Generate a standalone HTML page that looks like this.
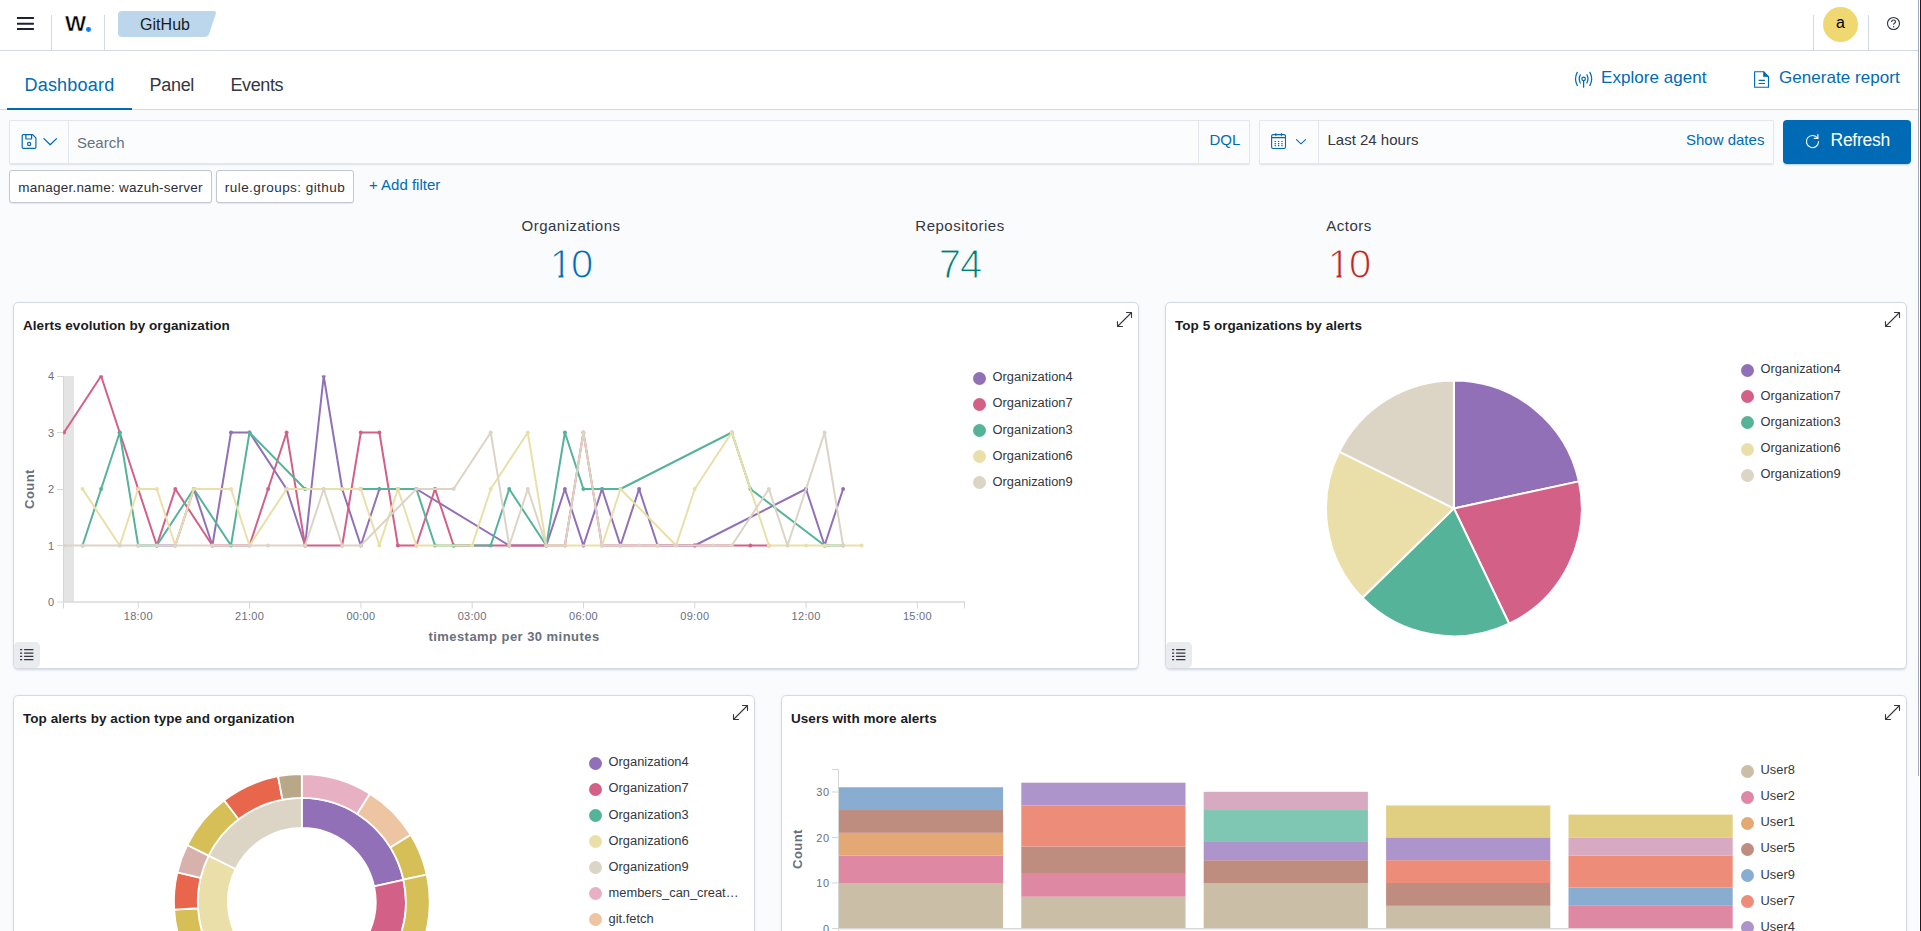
<!DOCTYPE html>
<html><head><meta charset="utf-8"><title>GitHub - Wazuh</title>
<style>
*{box-sizing:border-box;margin:0;padding:0}
html,body{width:1921px;height:931px;overflow:hidden}
body{background:#FAFBFD;font-family:"Liberation Sans",Arial,sans-serif;color:#343741;position:relative}
.abs{position:absolute}
#hdr{position:absolute;left:0;top:0;width:1918px;height:51px;background:#fff;border-bottom:1px solid #D3DAE6}
.vsep{position:absolute;top:15px;width:1px;height:35px;background:#D3DAE6}
#tabs{position:absolute;left:0;top:51px;width:1918px;height:59px;background:#fff;border-bottom:1px solid #D3DAE6}
.tab{position:absolute;top:22px;font-size:18px;line-height:24px;color:#343741;white-space:nowrap}
.lnk{position:absolute;color:#006BB4;white-space:nowrap}
.box{position:absolute;background:#FBFCFD;border:1px solid #E3E6EC;border-radius:1px;box-shadow:0 1px 1px -1px rgba(152,162,179,.3),0 2px 2px -1px rgba(152,162,179,.25)}
.pill{position:absolute;top:170px;height:32.5px;background:#fff;border:1px solid #C2C7D2;border-radius:3px;font-size:13.5px;line-height:33.5px;color:#2b2e38;white-space:nowrap;text-align:center;letter-spacing:.22px;box-shadow:0 1px 1px rgba(152,162,179,.2)}
.panel{position:absolute;background:#fff;border:1px solid #D3DAE6;border-radius:5px;box-shadow:0 2px 2px -1px rgba(152,162,179,.3),0 1px 5px -2px rgba(152,162,179,.3)}
.ttl{position:absolute;font-weight:700;font-size:13.5px;color:#1a1c21;white-space:nowrap;letter-spacing:.04px;line-height:16px}
.exp{position:absolute}
.lb{position:absolute;width:26px;height:26px;border-radius:4.5px;background:#E9EBEE}
.lb svg{position:absolute;left:6px;top:7px}
.lg{position:absolute;font-size:12.85px;line-height:20px;color:#343741;white-space:nowrap;padding-left:19.5px;letter-spacing:0}
.lg i{position:absolute;left:0;top:4.5px;width:13px;height:13px;border-radius:50%}
.stat{position:absolute;width:300px;text-align:center}
.stat .l{font-size:15px;line-height:20px;color:#343741;letter-spacing:.5px}
.stat .n{font-size:40px;line-height:46px;margin-top:5px;-webkit-text-stroke:1.1px #FAFBFD;letter-spacing:-1px}
.one{display:inline-block;clip-path:polygon(0 0,100% 0,100% 72%,64% 72%,64% 100%,42% 100%,42% 72%,0 72%)}
svg text.tk{font-size:11px;fill:#69707D;font-family:"Liberation Sans",Arial,sans-serif}
svg text.ax{font-size:13px;font-weight:700;fill:#69707D;font-family:"Liberation Sans",Arial,sans-serif;letter-spacing:.45px}
</style></head><body>

<!-- top header -->
<div id="hdr">
  <svg class="abs" style="left:17px;top:16px" width="18" height="16" viewBox="0 0 18 16"><path d="M0,2 H16.9 M0,7.7 H16.9 M0,13.05 H16.9" stroke="#1f222c" stroke-width="1.9"/></svg>
  <div class="vsep" style="left:51px"></div>
  <div class="abs" style="left:65px;top:9.8px;font-size:22.4px;font-weight:700;line-height:28px;color:#000;transform:scaleX(1.0);transform-origin:0 0;-webkit-text-stroke:.5px #fff">W</div>
  <div class="abs" style="left:85.75px;top:26.75px;width:4.9px;height:4.9px;border-radius:50%;background:#0A7BFF"></div>
  <div class="vsep" style="left:104px"></div>
  <svg class="abs" style="left:118px;top:11px" width="99" height="26" viewBox="0 0 99 26"><path d="M4,0 H95.5 Q98.8,0 97.8,3 L91,23 Q90,26 86.5,26 H4 Q0,26 0,22 V4 Q0,0 4,0 Z" fill="#BCD7EC"/></svg>
  <div class="abs" style="left:118px;top:12px;width:94px;height:26px;line-height:26px;text-align:center;font-size:16px;color:#1a1c21;letter-spacing:.05px">GitHub</div>
  <div class="vsep" style="left:1813px"></div>
  <div class="abs" style="left:1823px;top:7px;width:35px;height:35px;border-radius:50%;background:#EFD872;text-align:center;line-height:32px;font-size:16px;color:#000">a</div>
  <div class="vsep" style="left:1868px"></div>
  <svg class="abs" style="left:1886px;top:16px" width="15" height="15" viewBox="0 0 15 15"><circle cx="7.5" cy="7.5" r="6" fill="none" stroke="#343741" stroke-width="1.1"/><path d="M5.6,6 Q5.6,4 7.6,4 Q9.5,4 9.5,5.7 Q9.5,6.7 8.4,7.3 Q7.6,7.8 7.6,8.8" fill="none" stroke="#343741" stroke-width="1.1"/><circle cx="7.6" cy="10.7" r=".75" fill="#343741"/></svg>
</div>

<!-- tabs row -->
<div id="tabs">
  <div class="tab" style="left:24.5px;color:#006BB4;letter-spacing:.2px">Dashboard</div>
  <div class="tab" style="left:149.5px;letter-spacing:-.3px">Panel</div>
  <div class="tab" style="left:230.5px;letter-spacing:-.4px">Events</div>
  <div class="abs" style="left:7px;top:57px;width:125px;height:2px;background:#006BB4"></div>
  <svg class="abs" style="left:1574px;top:19px" width="20" height="19" viewBox="0 0 20 19"><g fill="none" stroke="#006BB4" stroke-width="1.25" stroke-linecap="round"><circle cx="9.6" cy="8.9" r="1.75"/><path d="M9.6,10.8 V17.2"/><path d="M6.3,4.8 Q4.2,8.9 6.3,13 M12.9,4.8 Q15,8.9 12.9,13"/><path d="M3.3,2.4 Q-0.3,8.9 3.3,15.4 M15.9,2.4 Q19.5,8.9 15.9,15.4"/></g></svg>
  <div class="lnk" style="left:1601px;top:16.4px;font-size:17px;line-height:22px;letter-spacing:.05px">Explore agent</div>
  <svg class="abs" style="left:1753px;top:19px" width="18" height="19" viewBox="0 0 18 19"><path d="M1.6,1.7 H10.6 L15.5,6.6 V17.2 H1.6 Z M5.6,10.4 H11.9 M5.6,13.5 H11.9" fill="none" stroke="#006BB4" stroke-width="1.15" stroke-linejoin="round"/><path d="M10.6,1.7 L15.5,6.6 H10.6 Z" fill="#006BB4" stroke="#006BB4" stroke-width=".8" stroke-linejoin="round"/></svg>
  <div class="lnk" style="left:1779px;top:16.4px;font-size:17px;line-height:22px;letter-spacing:.05px">Generate report</div>
</div>

<!-- search bar -->
<div class="box" style="left:9px;top:120px;width:1241px;height:44px"></div>
<div class="abs" style="left:68px;top:121px;width:1px;height:42px;background:#E3E6EC"></div>
<div class="abs" style="left:1198px;top:121px;width:1px;height:42px;background:#E3E6EC"></div>
<svg class="abs" style="left:20.5px;top:133px" width="40" height="18" viewBox="0 0 40 18"><g fill="none" stroke="#006BB4" stroke-width="1.2" stroke-linejoin="round" stroke-linecap="round"><path d="M2.4,1.6 H11.6 L14.9,4.9 V14.2 Q14.9,15.4 13.7,15.4 H2.4 Q1.2,15.4 1.2,14.2 V2.8 Q1.2,1.6 2.4,1.6 Z"/><path d="M4.9,1.9 V6 H10.6 V1.9"/><circle cx="8.1" cy="11" r="1.6"/><path d="M22.9,5.6 L29.2,11.7 L35.5,5.6" stroke-width="1.3"/></g></svg>
<div class="abs" style="left:77px;top:132.6px;font-size:15px;line-height:20px;color:#69707D">Search</div>
<div class="lnk" style="left:1209.5px;top:130px;font-size:15px;line-height:20px">DQL</div>

<!-- date picker -->
<div class="box" style="left:1259px;top:120px;width:515px;height:44px"></div>
<div class="abs" style="left:1318px;top:121px;width:1px;height:42px;background:#E3E6EC"></div>
<svg class="abs" style="left:1270px;top:131px" width="38" height="20" viewBox="0 0 38 20"><g fill="none" stroke="#006BB4" stroke-width="1.1" stroke-linecap="round"><rect x="1.6" y="3.6" width="13.9" height="13.9" rx="1.5"/><path d="M1.6,6.6 H15.5 M5.9,2.6 V4.6 M11.4,2.6 V4.6"/><path d="M4.6,10.5 H5.9 M7.9,10.5 H9.3 M11.3,10.5 H12.6 M4.6,12.6 H5.9 M7.9,12.6 H9.3 M11.3,12.6 H12.6 M4.6,14.7 H5.9 M7.9,14.7 H9.3 M11.3,14.7 H12.6" stroke-width="1.2" stroke-linecap="butt"/><path d="M26.4,8.6 L31,12.9 L35.6,8.6" stroke-width="1.05"/></g></svg>
<div class="abs" style="left:1327.5px;top:130px;font-size:15px;line-height:20px;color:#343741">Last 24 hours</div>
<div class="lnk" style="left:1686px;top:130px;font-size:15px;line-height:20px">Show dates</div>

<!-- refresh -->
<div class="abs" style="left:1783px;top:120px;width:128px;height:44px;background:#006BB4;border-radius:4px;box-shadow:0 2px 2px -1px rgba(0,107,180,.3)"></div>
<svg class="abs" style="left:1804.1px;top:133px" width="17" height="17" viewBox="0 0 17 17"><path d="M13.6,5.2 A6.1,6.1 0 1 0 14.6,8.6" fill="none" stroke="#fff" stroke-width="1.05" stroke-linecap="round"/><path d="M10.2,5.4 H13.9 V1.7" fill="none" stroke="#fff" stroke-width="1.2" stroke-linecap="round" stroke-linejoin="round"/></svg>
<div class="abs" style="left:1830.5px;top:129.3px;font-size:17.5px;line-height:22px;color:#fff;letter-spacing:-.25px">Refresh</div>

<!-- filter pills -->
<div class="pill" style="left:9px;width:203px">manager.name: wazuh-server</div>
<div class="pill" style="left:216px;width:138px;letter-spacing:.45px">rule.groups: github</div>
<div class="lnk" style="left:369px;top:175px;font-size:15px;line-height:20px">+ Add filter</div>

<!-- stats -->
<div class="stat" style="left:421px;top:216px"><div class="l">Organizations</div><div class="n" style="color:#006BB4"><span class="one">1</span>0</div></div>
<div class="stat" style="left:810px;top:216px"><div class="l">Repositories</div><div class="n" style="color:#017D73">74</div></div>
<div class="stat" style="left:1199px;top:216px"><div class="l">Actors</div><div class="n" style="color:#BD271E"><span class="one">1</span>0</div></div>

<!-- panels -->
<div class="panel" style="left:13px;top:302px;width:1126px;height:367px"></div>
<div class="panel" style="left:1165px;top:302px;width:742px;height:367px"></div>
<div class="panel" style="left:13px;top:695px;width:742px;height:260px"></div>
<div class="panel" style="left:781px;top:695px;width:1126px;height:260px"></div>

<div class="ttl" style="left:23px;top:318px">Alerts evolution by organization</div>
<div class="ttl" style="left:1175px;top:318px">Top 5 organizations by alerts</div>
<div class="ttl" style="left:23px;top:711px">Top alerts by action type and organization</div>
<div class="ttl" style="left:791px;top:711px">Users with more alerts</div>
<div class="exp" style="left:1116px;top:311px"><svg class="exp" width="17" height="17" viewBox="0 0 17 17"><path d="M10.5,1.5 H15.5 V6.5 M15,2 L2,15 M1.5,10.5 V15.5 H6.5" fill="none" stroke="#343741" stroke-width="1.1" stroke-linecap="round" stroke-linejoin="round"/></svg></div>
<div class="exp" style="left:1884px;top:311px"><svg class="exp" width="17" height="17" viewBox="0 0 17 17"><path d="M10.5,1.5 H15.5 V6.5 M15,2 L2,15 M1.5,10.5 V15.5 H6.5" fill="none" stroke="#343741" stroke-width="1.1" stroke-linecap="round" stroke-linejoin="round"/></svg></div>
<div class="exp" style="left:732px;top:704px"><svg class="exp" width="17" height="17" viewBox="0 0 17 17"><path d="M10.5,1.5 H15.5 V6.5 M15,2 L2,15 M1.5,10.5 V15.5 H6.5" fill="none" stroke="#343741" stroke-width="1.1" stroke-linecap="round" stroke-linejoin="round"/></svg></div>
<div class="exp" style="left:1884px;top:704px"><svg class="exp" width="17" height="17" viewBox="0 0 17 17"><path d="M10.5,1.5 H15.5 V6.5 M15,2 L2,15 M1.5,10.5 V15.5 H6.5" fill="none" stroke="#343741" stroke-width="1.1" stroke-linecap="round" stroke-linejoin="round"/></svg></div>
<div style="position:absolute;left:14px;top:642px"><div class="lb"><svg width="14" height="12" viewBox="0 0 14 12"><path d="M0,.7 H2.2 M0,4.05 H2.2 M0,7.4 H2.2 M0,10.6 H2.2" stroke="#343741" stroke-width="1.25"/><path d="M4.1,.7 H13.4 M4.1,4.05 H13.4 M4.1,7.4 H13.4 M4.1,10.6 H13.4" stroke="#343741" stroke-width="1.25"/></svg></div></div>
<div style="position:absolute;left:1166px;top:642px"><div class="lb"><svg width="14" height="12" viewBox="0 0 14 12"><path d="M0,.7 H2.2 M0,4.05 H2.2 M0,7.4 H2.2 M0,10.6 H2.2" stroke="#343741" stroke-width="1.25"/><path d="M4.1,.7 H13.4 M4.1,4.05 H13.4 M4.1,7.4 H13.4 M4.1,10.6 H13.4" stroke="#343741" stroke-width="1.25"/></svg></div></div>

<!-- charts -->
<svg class="abs" style="left:0;top:0;pointer-events:none" width="1921" height="931" viewBox="0 0 1921 931">
<defs><clipPath id="lc"><rect x="63.2" y="375.6" width="920" height="240"/></clipPath></defs>
<rect x="63" y="376" width="11" height="226" fill="#E4E4E4"/>
<path d="M63.5,376 V608.5 M57,376.5 H64 M57,432.5 H64 M57,489.5 H64 M57,545.5 H64 M57,602 H64" stroke="#D6D6D6" stroke-width="1" fill="none"/>
<path d="M63,602 H965" stroke="#DADADA" stroke-width="1.4" fill="none"/>
<path d="M138.3,602 V608.5 M249.6,602 V608.5 M360.9,602 V608.5 M472.2,602 V608.5 M583.5,602 V608.5 M694.8,602 V608.5 M806.1,602 V608.5 M917.4,602 V608.5  M964.5,602 V608.5" stroke="#D6D6D6" stroke-width="1" fill="none"/>
<text x="54" y="606.0" text-anchor="end" class="tk">0</text>
<text x="54" y="549.5" text-anchor="end" class="tk">1</text>
<text x="54" y="493.0" text-anchor="end" class="tk">2</text>
<text x="54" y="436.5" text-anchor="end" class="tk">3</text>
<text x="54" y="380.0" text-anchor="end" class="tk">4</text>
<text x="138.3" y="620" text-anchor="middle" class="tk" style="letter-spacing:.3px">18:00</text>
<text x="249.6" y="620" text-anchor="middle" class="tk" style="letter-spacing:.3px">21:00</text>
<text x="360.9" y="620" text-anchor="middle" class="tk" style="letter-spacing:.3px">00:00</text>
<text x="472.2" y="620" text-anchor="middle" class="tk" style="letter-spacing:.3px">03:00</text>
<text x="583.5" y="620" text-anchor="middle" class="tk" style="letter-spacing:.3px">06:00</text>
<text x="694.8" y="620" text-anchor="middle" class="tk" style="letter-spacing:.3px">09:00</text>
<text x="806.1" y="620" text-anchor="middle" class="tk" style="letter-spacing:.3px">12:00</text>
<text x="917.4" y="620" text-anchor="middle" class="tk" style="letter-spacing:.3px">15:00</text>
<text x="514" y="640.5" text-anchor="middle" class="ax">timestamp per 30 minutes</text>
<text transform="translate(34,489) rotate(-90)" text-anchor="middle" class="ax">Count</text>
<g clip-path="url(#lc)">
<path d="M156.8,545.5 L175.3,545.5 L193.8,489.0 L212.4,545.5 L231.0,432.5 L249.5,432.5 L286.6,489.0 L305.1,545.5 L323.7,376.0 L342.2,489.0 L360.8,545.5 L379.4,489.0 L397.9,489.0 L416.4,489.0 L509.2,545.5 L546.3,545.5 L564.9,489.0 L583.4,545.5 L602.0,489.0 L620.5,545.5 L639.1,489.0 L657.6,545.5 L694.7,545.5 L806.0,489.0 L824.6,545.5 L843.1,489.0" fill="none" stroke="#9170B8" stroke-width="2" stroke-linejoin="round" stroke-linecap="round"/>
<circle cx="156.8" cy="545.5" r="2" fill="#9170B8"/>
<circle cx="175.3" cy="545.5" r="2" fill="#9170B8"/>
<circle cx="193.8" cy="489.0" r="2" fill="#9170B8"/>
<circle cx="212.4" cy="545.5" r="2" fill="#9170B8"/>
<circle cx="231.0" cy="432.5" r="2" fill="#9170B8"/>
<circle cx="249.5" cy="432.5" r="2" fill="#9170B8"/>
<circle cx="286.6" cy="489.0" r="2" fill="#9170B8"/>
<circle cx="305.1" cy="545.5" r="2" fill="#9170B8"/>
<circle cx="323.7" cy="376.0" r="2" fill="#9170B8"/>
<circle cx="342.2" cy="489.0" r="2" fill="#9170B8"/>
<circle cx="360.8" cy="545.5" r="2" fill="#9170B8"/>
<circle cx="379.4" cy="489.0" r="2" fill="#9170B8"/>
<circle cx="397.9" cy="489.0" r="2" fill="#9170B8"/>
<circle cx="416.4" cy="489.0" r="2" fill="#9170B8"/>
<circle cx="509.2" cy="545.5" r="2" fill="#9170B8"/>
<circle cx="546.3" cy="545.5" r="2" fill="#9170B8"/>
<circle cx="564.9" cy="489.0" r="2" fill="#9170B8"/>
<circle cx="583.4" cy="545.5" r="2" fill="#9170B8"/>
<circle cx="602.0" cy="489.0" r="2" fill="#9170B8"/>
<circle cx="620.5" cy="545.5" r="2" fill="#9170B8"/>
<circle cx="639.1" cy="489.0" r="2" fill="#9170B8"/>
<circle cx="657.6" cy="545.5" r="2" fill="#9170B8"/>
<circle cx="694.7" cy="545.5" r="2" fill="#9170B8"/>
<circle cx="806.0" cy="489.0" r="2" fill="#9170B8"/>
<circle cx="824.6" cy="545.5" r="2" fill="#9170B8"/>
<circle cx="843.1" cy="489.0" r="2" fill="#9170B8"/>
<path d="M64.0,432.5 L101.1,376.0 L119.7,432.5 L138.2,489.0 L156.8,545.5 L175.3,489.0 L212.4,545.5 L249.5,545.5 L268.1,489.0 L286.6,432.5 L305.1,545.5 L342.2,545.5 L360.8,432.5 L379.4,432.5 L397.9,545.5 L416.4,545.5 L435.0,489.0 L453.6,545.5 L509.2,545.5 L546.3,545.5 L564.9,545.5 L583.4,432.5 L602.0,545.5 L694.7,545.5 L750.4,545.5 L768.9,545.5" fill="none" stroke="#D36086" stroke-width="2" stroke-linejoin="round" stroke-linecap="round"/>
<circle cx="64.0" cy="432.5" r="2" fill="#D36086"/>
<circle cx="101.1" cy="376.0" r="2" fill="#D36086"/>
<circle cx="119.7" cy="432.5" r="2" fill="#D36086"/>
<circle cx="138.2" cy="489.0" r="2" fill="#D36086"/>
<circle cx="156.8" cy="545.5" r="2" fill="#D36086"/>
<circle cx="175.3" cy="489.0" r="2" fill="#D36086"/>
<circle cx="212.4" cy="545.5" r="2" fill="#D36086"/>
<circle cx="249.5" cy="545.5" r="2" fill="#D36086"/>
<circle cx="268.1" cy="489.0" r="2" fill="#D36086"/>
<circle cx="286.6" cy="432.5" r="2" fill="#D36086"/>
<circle cx="305.1" cy="545.5" r="2" fill="#D36086"/>
<circle cx="342.2" cy="545.5" r="2" fill="#D36086"/>
<circle cx="360.8" cy="432.5" r="2" fill="#D36086"/>
<circle cx="379.4" cy="432.5" r="2" fill="#D36086"/>
<circle cx="397.9" cy="545.5" r="2" fill="#D36086"/>
<circle cx="416.4" cy="545.5" r="2" fill="#D36086"/>
<circle cx="435.0" cy="489.0" r="2" fill="#D36086"/>
<circle cx="453.6" cy="545.5" r="2" fill="#D36086"/>
<circle cx="509.2" cy="545.5" r="2" fill="#D36086"/>
<circle cx="546.3" cy="545.5" r="2" fill="#D36086"/>
<circle cx="564.9" cy="545.5" r="2" fill="#D36086"/>
<circle cx="583.4" cy="432.5" r="2" fill="#D36086"/>
<circle cx="602.0" cy="545.5" r="2" fill="#D36086"/>
<circle cx="694.7" cy="545.5" r="2" fill="#D36086"/>
<circle cx="750.4" cy="545.5" r="2" fill="#D36086"/>
<circle cx="768.9" cy="545.5" r="2" fill="#D36086"/>
<path d="M82.5,545.5 L101.1,489.0 L119.7,432.5 L138.2,545.5 L156.8,545.5 L193.8,489.0 L231.0,545.5 L249.5,432.5 L305.1,489.0 L360.8,489.0 L416.4,489.0 L435.0,545.5 L453.6,545.5 L490.7,545.5 L509.2,489.0 L546.3,545.5 L564.9,432.5 L583.4,489.0 L620.5,489.0 L731.8,432.5 L750.4,489.0 L824.6,545.5 L843.1,545.5" fill="none" stroke="#54B399" stroke-width="2" stroke-linejoin="round" stroke-linecap="round"/>
<circle cx="82.5" cy="545.5" r="2" fill="#54B399"/>
<circle cx="101.1" cy="489.0" r="2" fill="#54B399"/>
<circle cx="119.7" cy="432.5" r="2" fill="#54B399"/>
<circle cx="138.2" cy="545.5" r="2" fill="#54B399"/>
<circle cx="156.8" cy="545.5" r="2" fill="#54B399"/>
<circle cx="193.8" cy="489.0" r="2" fill="#54B399"/>
<circle cx="231.0" cy="545.5" r="2" fill="#54B399"/>
<circle cx="249.5" cy="432.5" r="2" fill="#54B399"/>
<circle cx="305.1" cy="489.0" r="2" fill="#54B399"/>
<circle cx="360.8" cy="489.0" r="2" fill="#54B399"/>
<circle cx="416.4" cy="489.0" r="2" fill="#54B399"/>
<circle cx="435.0" cy="545.5" r="2" fill="#54B399"/>
<circle cx="453.6" cy="545.5" r="2" fill="#54B399"/>
<circle cx="490.7" cy="545.5" r="2" fill="#54B399"/>
<circle cx="509.2" cy="489.0" r="2" fill="#54B399"/>
<circle cx="546.3" cy="545.5" r="2" fill="#54B399"/>
<circle cx="564.9" cy="432.5" r="2" fill="#54B399"/>
<circle cx="583.4" cy="489.0" r="2" fill="#54B399"/>
<circle cx="620.5" cy="489.0" r="2" fill="#54B399"/>
<circle cx="731.8" cy="432.5" r="2" fill="#54B399"/>
<circle cx="750.4" cy="489.0" r="2" fill="#54B399"/>
<circle cx="824.6" cy="545.5" r="2" fill="#54B399"/>
<circle cx="843.1" cy="545.5" r="2" fill="#54B399"/>
<path d="M82.5,489.0 L119.7,545.5 L138.2,489.0 L156.8,489.0 L175.3,545.5 L193.8,489.0 L231.0,489.0 L249.5,545.5 L286.6,489.0 L323.7,489.0 L342.2,489.0 L360.8,489.0 L379.4,545.5 L397.9,489.0 L416.4,545.5 L472.1,545.5 L490.7,489.0 L527.8,432.5 L546.3,545.5 L602.0,545.5 L620.5,489.0 L676.1,545.5 L694.7,489.0 L731.8,432.5 L768.9,545.5 L806.0,545.5 L824.6,545.5 L861.6,545.5" fill="none" stroke="#EBDFA9" stroke-width="2" stroke-linejoin="round" stroke-linecap="round"/>
<circle cx="82.5" cy="489.0" r="2" fill="#EBDFA9"/>
<circle cx="119.7" cy="545.5" r="2" fill="#EBDFA9"/>
<circle cx="138.2" cy="489.0" r="2" fill="#EBDFA9"/>
<circle cx="156.8" cy="489.0" r="2" fill="#EBDFA9"/>
<circle cx="175.3" cy="545.5" r="2" fill="#EBDFA9"/>
<circle cx="193.8" cy="489.0" r="2" fill="#EBDFA9"/>
<circle cx="231.0" cy="489.0" r="2" fill="#EBDFA9"/>
<circle cx="249.5" cy="545.5" r="2" fill="#EBDFA9"/>
<circle cx="286.6" cy="489.0" r="2" fill="#EBDFA9"/>
<circle cx="323.7" cy="489.0" r="2" fill="#EBDFA9"/>
<circle cx="342.2" cy="489.0" r="2" fill="#EBDFA9"/>
<circle cx="360.8" cy="489.0" r="2" fill="#EBDFA9"/>
<circle cx="379.4" cy="545.5" r="2" fill="#EBDFA9"/>
<circle cx="397.9" cy="489.0" r="2" fill="#EBDFA9"/>
<circle cx="416.4" cy="545.5" r="2" fill="#EBDFA9"/>
<circle cx="472.1" cy="545.5" r="2" fill="#EBDFA9"/>
<circle cx="490.7" cy="489.0" r="2" fill="#EBDFA9"/>
<circle cx="527.8" cy="432.5" r="2" fill="#EBDFA9"/>
<circle cx="546.3" cy="545.5" r="2" fill="#EBDFA9"/>
<circle cx="602.0" cy="545.5" r="2" fill="#EBDFA9"/>
<circle cx="620.5" cy="489.0" r="2" fill="#EBDFA9"/>
<circle cx="676.1" cy="545.5" r="2" fill="#EBDFA9"/>
<circle cx="694.7" cy="489.0" r="2" fill="#EBDFA9"/>
<circle cx="731.8" cy="432.5" r="2" fill="#EBDFA9"/>
<circle cx="768.9" cy="545.5" r="2" fill="#EBDFA9"/>
<circle cx="806.0" cy="545.5" r="2" fill="#EBDFA9"/>
<circle cx="824.6" cy="545.5" r="2" fill="#EBDFA9"/>
<circle cx="861.6" cy="545.5" r="2" fill="#EBDFA9"/>
<path d="M64.0,545.5 L82.5,545.5 L119.7,545.5 L138.2,545.5 L156.8,545.5 L175.3,545.5 L212.4,545.5 L249.5,545.5 L268.1,545.5 L305.1,545.5 L323.7,489.0 L342.2,545.5 L360.8,545.5 L416.4,489.0 L453.6,489.0 L490.7,432.5 L509.2,545.5 L527.8,489.0 L546.3,545.5 L564.9,545.5 L583.4,432.5 L602.0,545.5 L620.5,545.5 L639.1,545.5 L657.6,545.5 L676.1,545.5 L713.2,545.5 L731.8,545.5 L768.9,489.0 L787.5,545.5 L824.6,432.5 L843.1,545.5" fill="none" stroke="#DCD4C4" stroke-width="2" stroke-linejoin="round" stroke-linecap="round"/>
<circle cx="64.0" cy="545.5" r="2" fill="#DCD4C4"/>
<circle cx="82.5" cy="545.5" r="2" fill="#DCD4C4"/>
<circle cx="119.7" cy="545.5" r="2" fill="#DCD4C4"/>
<circle cx="138.2" cy="545.5" r="2" fill="#DCD4C4"/>
<circle cx="156.8" cy="545.5" r="2" fill="#DCD4C4"/>
<circle cx="175.3" cy="545.5" r="2" fill="#DCD4C4"/>
<circle cx="212.4" cy="545.5" r="2" fill="#DCD4C4"/>
<circle cx="249.5" cy="545.5" r="2" fill="#DCD4C4"/>
<circle cx="268.1" cy="545.5" r="2" fill="#DCD4C4"/>
<circle cx="305.1" cy="545.5" r="2" fill="#DCD4C4"/>
<circle cx="323.7" cy="489.0" r="2" fill="#DCD4C4"/>
<circle cx="342.2" cy="545.5" r="2" fill="#DCD4C4"/>
<circle cx="360.8" cy="545.5" r="2" fill="#DCD4C4"/>
<circle cx="416.4" cy="489.0" r="2" fill="#DCD4C4"/>
<circle cx="453.6" cy="489.0" r="2" fill="#DCD4C4"/>
<circle cx="490.7" cy="432.5" r="2" fill="#DCD4C4"/>
<circle cx="509.2" cy="545.5" r="2" fill="#DCD4C4"/>
<circle cx="527.8" cy="489.0" r="2" fill="#DCD4C4"/>
<circle cx="546.3" cy="545.5" r="2" fill="#DCD4C4"/>
<circle cx="564.9" cy="545.5" r="2" fill="#DCD4C4"/>
<circle cx="583.4" cy="432.5" r="2" fill="#DCD4C4"/>
<circle cx="602.0" cy="545.5" r="2" fill="#DCD4C4"/>
<circle cx="620.5" cy="545.5" r="2" fill="#DCD4C4"/>
<circle cx="639.1" cy="545.5" r="2" fill="#DCD4C4"/>
<circle cx="657.6" cy="545.5" r="2" fill="#DCD4C4"/>
<circle cx="676.1" cy="545.5" r="2" fill="#DCD4C4"/>
<circle cx="713.2" cy="545.5" r="2" fill="#DCD4C4"/>
<circle cx="731.8" cy="545.5" r="2" fill="#DCD4C4"/>
<circle cx="768.9" cy="489.0" r="2" fill="#DCD4C4"/>
<circle cx="787.5" cy="545.5" r="2" fill="#DCD4C4"/>
<circle cx="824.6" cy="432.5" r="2" fill="#DCD4C4"/>
<circle cx="843.1" cy="545.5" r="2" fill="#DCD4C4"/>
</g>
<path d="M1453.90,508.40 L1453.90,380.50 A127.9,127.9 0 0 1 1578.91,481.37 Z" fill="#9170B8" stroke="#fff" stroke-width="2" stroke-linejoin="round"/>
<path d="M1453.90,508.40 L1578.91,481.37 A127.9,127.9 0 0 1 1509.16,623.74 Z" fill="#D36086" stroke="#fff" stroke-width="2" stroke-linejoin="round"/>
<path d="M1453.90,508.40 L1509.16,623.74 A127.9,127.9 0 0 1 1362.36,597.73 Z" fill="#54B399" stroke="#fff" stroke-width="2" stroke-linejoin="round"/>
<path d="M1453.90,508.40 L1362.36,597.73 A127.9,127.9 0 0 1 1339.34,451.53 Z" fill="#EBDFA9" stroke="#fff" stroke-width="2" stroke-linejoin="round"/>
<path d="M1453.90,508.40 L1339.34,451.53 A127.9,127.9 0 0 1 1453.90,380.50 Z" fill="#DCD4C4" stroke="#fff" stroke-width="2" stroke-linejoin="round"/>
<path d="M301.80,797.90 A104,104 0 0 1 403.45,879.92 L374.03,886.28 A73.9,73.9 0 0 0 301.80,828.00 Z" fill="#9170B8" stroke="#fff" stroke-width="1.8" stroke-linejoin="round"/>
<path d="M403.45,879.92 A104,104 0 0 1 346.74,995.69 L333.73,968.55 A73.9,73.9 0 0 0 374.03,886.28 Z" fill="#D36086" stroke="#fff" stroke-width="1.8" stroke-linejoin="round"/>
<path d="M346.74,995.69 A104,104 0 0 1 227.37,974.54 L248.91,953.51 A73.9,73.9 0 0 0 333.73,968.55 Z" fill="#54B399" stroke="#fff" stroke-width="1.8" stroke-linejoin="round"/>
<path d="M227.37,974.54 A104,104 0 0 1 208.65,855.66 L235.61,869.04 A73.9,73.9 0 0 0 248.91,953.51 Z" fill="#EBDFA9" stroke="#fff" stroke-width="1.8" stroke-linejoin="round"/>
<path d="M208.65,855.66 A104,104 0 0 1 301.80,797.90 L301.80,828.00 A73.9,73.9 0 0 0 235.61,869.04 Z" fill="#DCD4C4" stroke="#fff" stroke-width="1.8" stroke-linejoin="round"/>
<path d="M301.80,774.00 A127.9,127.9 0 0 1 369.95,793.67 L357.22,813.90 A104,104 0 0 0 301.80,797.90 Z" fill="#E8B0C3" stroke="#fff" stroke-width="1.8" stroke-linejoin="round"/>
<path d="M369.95,793.67 A127.9,127.9 0 0 1 410.74,834.88 L390.38,847.41 A104,104 0 0 0 357.22,813.90 Z" fill="#EEC5A2" stroke="#fff" stroke-width="1.8" stroke-linejoin="round"/>
<path d="M410.74,834.88 A127.9,127.9 0 0 1 426.76,874.65 L403.41,879.74 A104,104 0 0 0 390.38,847.41 Z" fill="#D6BF57" stroke="#fff" stroke-width="1.8" stroke-linejoin="round"/>
<path d="M426.76,874.65 A127.9,127.9 0 0 1 414.73,961.95 L393.63,950.73 A104,104 0 0 0 403.41,879.74 Z" fill="#D6BF57" stroke="#fff" stroke-width="1.8" stroke-linejoin="round"/>
<path d="M414.73,961.95 A127.9,127.9 0 0 1 357.06,1017.24 L346.74,995.69 A104,104 0 0 0 393.63,950.73 Z" fill="#E7664C" stroke="#fff" stroke-width="1.8" stroke-linejoin="round"/>
<path d="M357.06,1017.24 A127.9,127.9 0 0 1 279.59,1027.86 L283.74,1004.32 A104,104 0 0 0 346.74,995.69 Z" fill="#D6BF57" stroke="#fff" stroke-width="1.8" stroke-linejoin="round"/>
<path d="M279.59,1027.86 A127.9,127.9 0 0 1 210.26,991.23 L227.37,974.54 A104,104 0 0 0 283.74,1004.32 Z" fill="#E8B0C3" stroke="#fff" stroke-width="1.8" stroke-linejoin="round"/>
<path d="M210.26,991.23 A127.9,127.9 0 0 1 174.14,909.71 L197.99,908.25 A104,104 0 0 0 227.37,974.54 Z" fill="#D6BF57" stroke="#fff" stroke-width="1.8" stroke-linejoin="round"/>
<path d="M174.14,909.71 A127.9,127.9 0 0 1 177.33,872.48 L200.59,877.97 A104,104 0 0 0 197.99,908.25 Z" fill="#E7664C" stroke="#fff" stroke-width="1.8" stroke-linejoin="round"/>
<path d="M177.33,872.48 A127.9,127.9 0 0 1 187.24,845.03 L208.65,855.66 A104,104 0 0 0 200.59,877.97 Z" fill="#D7B1AC" stroke="#fff" stroke-width="1.8" stroke-linejoin="round"/>
<path d="M187.24,845.03 A127.9,127.9 0 0 1 224.12,800.29 L238.63,819.28 A104,104 0 0 0 208.65,855.66 Z" fill="#D6BF57" stroke="#fff" stroke-width="1.8" stroke-linejoin="round"/>
<path d="M224.12,800.29 A127.9,127.9 0 0 1 278.05,776.22 L282.49,799.71 A104,104 0 0 0 238.63,819.28 Z" fill="#E7664C" stroke="#fff" stroke-width="1.8" stroke-linejoin="round"/>
<path d="M278.05,776.22 A127.9,127.9 0 0 1 301.80,774.00 L301.80,797.90 A104,104 0 0 0 282.49,799.71 Z" fill="#B9A888" stroke="#fff" stroke-width="1.8" stroke-linejoin="round"/>
<rect x="838.9" y="883.00" width="164.2" height="45.60" fill="#CABEA6"/>
<rect x="838.9" y="855.64" width="164.2" height="27.36" fill="#DE88A4"/>
<rect x="838.9" y="832.84" width="164.2" height="22.80" fill="#E3A874"/>
<rect x="838.9" y="810.04" width="164.2" height="22.80" fill="#BF8C80"/>
<rect x="838.9" y="787.24" width="164.2" height="22.80" fill="#88ADD0"/>
<rect x="1021.3" y="896.68" width="164.2" height="31.92" fill="#CABEA6"/>
<rect x="1021.3" y="873.88" width="164.2" height="22.80" fill="#DE88A4"/>
<rect x="1021.3" y="846.52" width="164.2" height="27.36" fill="#BF8C80"/>
<rect x="1021.3" y="805.48" width="164.2" height="41.04" fill="#ED8C79"/>
<rect x="1021.3" y="782.68" width="164.2" height="22.80" fill="#AD94CA"/>
<rect x="1203.7" y="883.00" width="164.2" height="45.60" fill="#CABEA6"/>
<rect x="1203.7" y="860.20" width="164.2" height="22.80" fill="#BF8C80"/>
<rect x="1203.7" y="841.96" width="164.2" height="18.24" fill="#AD94CA"/>
<rect x="1203.7" y="810.04" width="164.2" height="31.92" fill="#7FC6B3"/>
<rect x="1203.7" y="791.80" width="164.2" height="18.24" fill="#D7AAC2"/>
<rect x="1386.1" y="905.80" width="164.2" height="22.80" fill="#CABEA6"/>
<rect x="1386.1" y="883.00" width="164.2" height="22.80" fill="#BF8C80"/>
<rect x="1386.1" y="860.20" width="164.2" height="22.80" fill="#ED8C79"/>
<rect x="1386.1" y="837.40" width="164.2" height="22.80" fill="#AD94CA"/>
<rect x="1386.1" y="805.48" width="164.2" height="31.92" fill="#E0CF81"/>
<rect x="1568.5" y="905.80" width="164.2" height="22.80" fill="#DE88A4"/>
<rect x="1568.5" y="887.56" width="164.2" height="18.24" fill="#88ADD0"/>
<rect x="1568.5" y="855.64" width="164.2" height="31.92" fill="#ED8C79"/>
<rect x="1568.5" y="837.40" width="164.2" height="18.24" fill="#D7AAC2"/>
<rect x="1568.5" y="814.60" width="164.2" height="22.80" fill="#E0CF81"/>
<path d="M838.5,769 V931 M832,769.5 H839 M832,792 H839 M832,837.5 H839 M832,883 H839 M832,928.5 H839" stroke="#D6D6D6" stroke-width="1" fill="none"/>
<path d="M838,928.7 H1733" stroke="#DADADA" stroke-width="1.4" fill="none"/>
<text x="829.6" y="796" text-anchor="end" class="tk" style="letter-spacing:.55px">30</text>
<text x="829.6" y="841.5" text-anchor="end" class="tk" style="letter-spacing:.55px">20</text>
<text x="829.6" y="887" text-anchor="end" class="tk" style="letter-spacing:.55px">10</text>
<text x="829.6" y="932.5" text-anchor="end" class="tk" style="letter-spacing:.55px">0</text>
<text transform="translate(802,849) rotate(-90)" text-anchor="middle" class="ax">Count</text>
</svg>

<div class="lg" style="left:973.1px;top:367.1px"><i style="background:#9170B8"></i>Organization4</div>
<div class="lg" style="left:973.1px;top:393.3px"><i style="background:#D36086"></i>Organization7</div>
<div class="lg" style="left:973.1px;top:419.5px"><i style="background:#54B399"></i>Organization3</div>
<div class="lg" style="left:973.1px;top:445.7px"><i style="background:#EBDFA9"></i>Organization6</div>
<div class="lg" style="left:973.1px;top:471.9px"><i style="background:#DCD4C4"></i>Organization9</div>
<div class="lg" style="left:1741.1px;top:359.2px"><i style="background:#9170B8"></i>Organization4</div>
<div class="lg" style="left:1741.1px;top:385.5px"><i style="background:#D36086"></i>Organization7</div>
<div class="lg" style="left:1741.1px;top:411.8px"><i style="background:#54B399"></i>Organization3</div>
<div class="lg" style="left:1741.1px;top:438.1px"><i style="background:#EBDFA9"></i>Organization6</div>
<div class="lg" style="left:1741.1px;top:464.4px"><i style="background:#DCD4C4"></i>Organization9</div>
<div class="lg" style="left:589.1px;top:752.3px"><i style="background:#9170B8"></i>Organization4</div>
<div class="lg" style="left:589.1px;top:778.4px"><i style="background:#D36086"></i>Organization7</div>
<div class="lg" style="left:589.1px;top:804.5px"><i style="background:#54B399"></i>Organization3</div>
<div class="lg" style="left:589.1px;top:830.6px"><i style="background:#EBDFA9"></i>Organization6</div>
<div class="lg" style="left:589.1px;top:856.7px"><i style="background:#DCD4C4"></i>Organization9</div>
<div class="lg" style="left:589.1px;top:882.8px"><i style="background:#E8B0C3"></i>members_can_creat…</div>
<div class="lg" style="left:589.1px;top:908.9px"><i style="background:#EEC5A2"></i>git.fetch</div>
<div class="lg" style="left:1741.1px;top:760.1px"><i style="background:#CABEA6"></i>User8</div>
<div class="lg" style="left:1741.1px;top:786.2px"><i style="background:#DE88A4"></i>User2</div>
<div class="lg" style="left:1741.1px;top:812.3px"><i style="background:#E3A874"></i>User1</div>
<div class="lg" style="left:1741.1px;top:838.4px"><i style="background:#BF8C80"></i>User5</div>
<div class="lg" style="left:1741.1px;top:864.5px"><i style="background:#88ADD0"></i>User9</div>
<div class="lg" style="left:1741.1px;top:890.6px"><i style="background:#ED8C79"></i>User7</div>
<div class="lg" style="left:1741.1px;top:916.7px"><i style="background:#AD94CA"></i>User4</div>

<!-- scrollbar / window edge -->
<div class="abs" style="left:1918px;top:0;width:1px;height:776px;background:#A4A8B8"></div>
<div class="abs" style="left:1919px;top:0;width:1px;height:931px;background:#fff"></div>
<div class="abs" style="left:1920px;top:0;width:1px;height:931px;background:#1a1c21"></div>
</body></html>
